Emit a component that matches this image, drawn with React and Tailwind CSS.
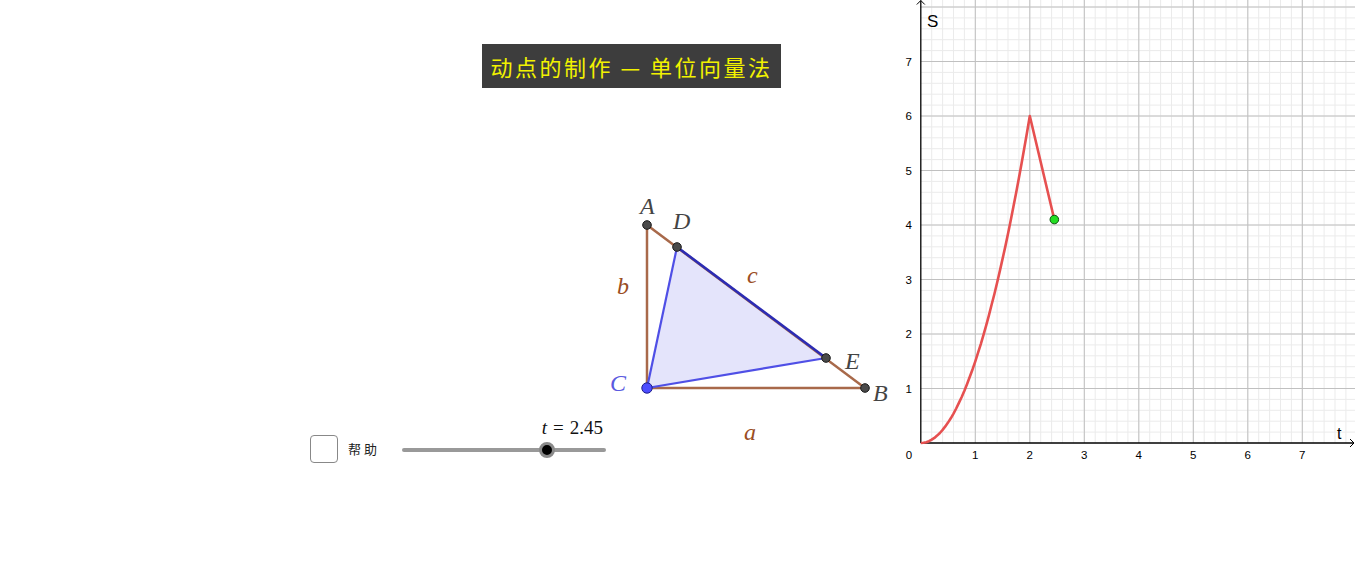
import React from 'react'

const O = { x: 920.8, y: 443 }
const U = 54.5

const px = (t) => O.x + t * U
const py = (s) => O.y - s * U

const Graph = () => {
  const minorX = []
  for (let x = O.x + U / 5; x < 1356; x += U / 5) minorX.push(x)
  const minorY = []
  for (let y = O.y - U / 5; y > 0; y -= U / 5) minorY.push(y)

  const curve = []
  for (let i = 0; i <= 40; i++) {
    const t = (i / 40) * 2
    curve.push(`${px(t).toFixed(1)},${py(1.5 * t * t).toFixed(1)}`)
  }
  curve.push(`${px(2.45)},${py(4.1)}`)

  return (
    <svg
      className="absolute left-[890px] top-0"
      width="465"
      height="572"
      viewBox="890 0 465 572"
    >
      {minorX.map((x, i) => (
        <line key={'mx' + i} x1={x} y1={0} x2={x} y2={O.y} stroke="#ebebeb" strokeWidth="1" />
      ))}
      {minorY.map((y, i) => (
        <line key={'my' + i} x1={O.x} y1={y} x2={1355} y2={y} stroke="#ebebeb" strokeWidth="1" />
      ))}
      {[1, 2, 3, 4, 5, 6, 7].map((k) => (
        <line key={'gx' + k} x1={px(k)} y1={0} x2={px(k)} y2={O.y} stroke="#c0c0c0" strokeWidth="1" />
      ))}
      {[1, 2, 3, 4, 5, 6, 7, 8].map((k) => (
        <line key={'gy' + k} x1={O.x} y1={py(k)} x2={1355} y2={py(k)} stroke="#c0c0c0" strokeWidth="1" />
      ))}

      <line x1={O.x} y1={O.y} x2={O.x} y2={0.5} stroke="#000" strokeWidth="1.3" />
      <polyline points={`${O.x - 4},4.5 ${O.x},0.5 ${O.x + 4},4.5`} fill="none" stroke="#000" strokeWidth="1" />
      <line x1={O.x} y1={O.y} x2={1354} y2={O.y} stroke="#000" strokeWidth="1.3" />
      <polyline points={`1350,${O.y - 4} 1354,${O.y} 1350,${O.y + 4}`} fill="none" stroke="#000" strokeWidth="1" />

      <g fontFamily="'Liberation Sans', Arial, sans-serif" fontSize="11.5" fill="#000">
        {[1, 2, 3, 4, 5, 6, 7].map((k) => (
          <text key={'ly' + k} x={912} y={py(k) + 4} textAnchor="end">{k}</text>
        ))}
        <text x={909} y={459} textAnchor="middle">0</text>
        {[1, 2, 3, 4, 5, 6, 7].map((k) => (
          <text key={'lx' + k} x={px(k)} y={459} textAnchor="middle">{k}</text>
        ))}
      </g>
      <text x={927} y={27} fontFamily="'Liberation Sans', Arial, sans-serif" fontSize="17" fill="#000">S</text>
      <text x={1337} y={439} fontFamily="'Liberation Sans', Arial, sans-serif" fontSize="16" fill="#000">t</text>

      <polyline points={curve.join(' ')} fill="none" stroke="#e65050" strokeWidth="2.6" strokeLinejoin="round" />
      <circle cx={px(2.45)} cy={py(4.1)} r="4.3" fill="#22dd22" stroke="#105010" strokeWidth="1" />
    </svg>
  )
}

const Triangle = () => {
  const A = [647, 225]
  const C = [647, 388]
  const B = [865, 388]
  const D = [677, 247]
  const E = [826, 358]
  const brown = '#a8694a'
  const lbl = "'Liberation Serif', 'Times New Roman', serif"

  return (
    <svg className="absolute left-[590px] top-[180px]" width="320" height="270" viewBox="590 180 320 270">
      <polygon points={`${C} ${D} ${E}`} fill="#e4e4fb" />
      <line x1={A[0]} y1={A[1]} x2={C[0]} y2={C[1]} stroke={brown} strokeWidth="2.5" />
      <line x1={C[0]} y1={C[1]} x2={B[0]} y2={B[1]} stroke={brown} strokeWidth="2.5" />
      <line x1={A[0]} y1={A[1]} x2={B[0]} y2={B[1]} stroke={brown} strokeWidth="2.5" />
      <line x1={C[0]} y1={C[1]} x2={D[0]} y2={D[1]} stroke="#4f4fe6" strokeWidth="2.2" />
      <line x1={C[0]} y1={C[1]} x2={E[0]} y2={E[1]} stroke="#4f4fe6" strokeWidth="2.2" />
      <line x1={D[0]} y1={D[1]} x2={E[0]} y2={E[1]} stroke="#2c2cb4" strokeWidth="2.6" />

      {[A, B, D, E].map((p, i) => (
        <circle key={i} cx={p[0]} cy={p[1]} r="4.3" fill="#4a4a4a" stroke="#1a1a1a" strokeWidth="1" />
      ))}
      <circle cx={C[0]} cy={C[1]} r="5.2" fill="#4d4dff" stroke="#1f1f8a" strokeWidth="1" />

      <g fontFamily={lbl} fontStyle="italic" fontSize="24" fill="#444">
        <text x={640} y={214}>A</text>
        <text x={673} y={229}>D</text>
        <text x={845} y={369}>E</text>
        <text x={873} y={401}>B</text>
        <text x={610} y={391} fill="#5a5ae0">C</text>
      </g>
      <g fontFamily={lbl} fontStyle="italic" fontSize="24" fill="#9a4d23">
        <text x={747} y={283}>c</text>
        <text x={617} y={294}>b</text>
        <text x={744} y={440}>a</text>
      </g>
    </svg>
  )
}

export default function App() {
  return (
    <div className="relative w-[1355px] h-[572px] bg-white overflow-hidden">
      <div className="absolute left-[482px] top-[44px] w-[299px] h-[44px] bg-[#3d3d3d] flex items-center justify-center">
        <span className="text-[22px] tracking-[2.5px] text-[#f2f200] font-['Noto_Sans_CJK_SC',sans-serif] whitespace-nowrap">
          动点的制作 — 单位向量法
        </span>
      </div>

      <Triangle />
      <Graph />

      <div className="absolute left-[310px] top-[435px] flex items-center">
        <div className="w-[28px] h-[28px] border border-[#888] rounded-[4px] bg-white" />
        <span className="ml-[10px] text-[13px] text-[#222] tracking-[3px] font-['Noto_Sans_CJK_SC',sans-serif]">
          帮助
        </span>
        <div className="relative ml-[22px] mt-[2px] w-[204px] h-[4px] rounded-full bg-[#999]">
          <div className="absolute right-[3px] bottom-[10px] flex items-baseline text-[19px] text-[#111] font-['Liberation_Serif',serif] whitespace-nowrap">
            <span className="italic">t</span>
            <span className="mx-[6px]">=</span>
            <span>2.45</span>
          </div>
          <div className="absolute left-[137px] top-[-6px] w-[16px] h-[16px] rounded-full bg-[#000] border-[3px] border-[#8a8a8a]" />
        </div>
      </div>
    </div>
  )
}
